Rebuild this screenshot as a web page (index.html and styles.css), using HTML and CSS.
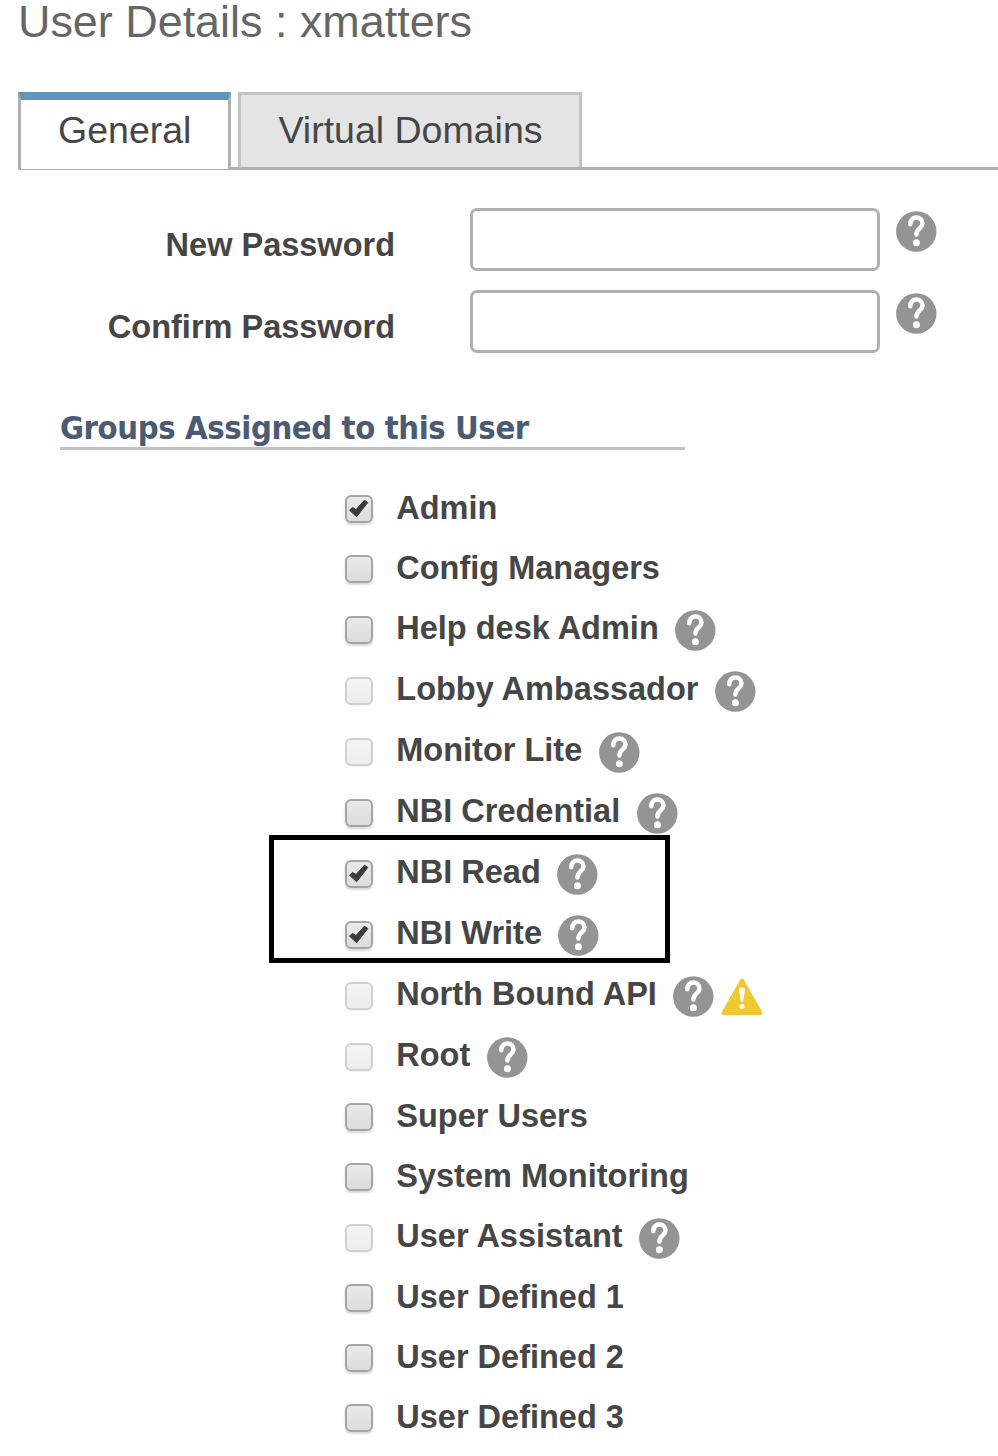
FILE: index.html
```
<!DOCTYPE html>
<html lang="en">
<head>
<meta charset="utf-8">
<title>User Details : xmatters</title>
<link rel="stylesheet" href="styles.css">
</head>
<body>
<svg width="0" height="0" class="defs">
  <symbol id="help" viewBox="0 0 41 41">
    <circle cx="20.3" cy="20.5" r="20.2" fill="#949494"/>
    <path d="M14.300 13.200C14.300 9 16.800 6.600 20.400 6.600C24.100 6.600 26.500 9 26.500 12.600C26.500 17.400 20.400 17.600 20.400 23.400" fill="none" stroke="#fff" stroke-width="4.500" stroke-linecap="round"/>
    <circle cx="20.400" cy="31.800" r="3.500" fill="#fff"/>
  </symbol>
  <symbol id="check" viewBox="0 0 28 28">
    <path d="M4.600 15.200L7.600 12.400L11 14.600L19.400 5.200L22.800 7.500L11.600 21.800Z" fill="#3b3b3b" stroke="#3b3b3b" stroke-width="1" stroke-linejoin="round"/>
  </symbol>
  <symbol id="warn" viewBox="0 0 42 38">
    <path d="M21 2.500L39.500 35H2.500Z" fill="#f0c930" stroke="#f0c930" stroke-width="4" stroke-linejoin="round"/>
    <path d="M18 12Q18 9.500 21 9.500Q24 9.500 24 12L22.200 23.500H19.800Z" fill="#fff"/>
    <circle cx="21" cy="28.500" r="2.500" fill="#fff"/>
  </symbol>
</svg>
<h1 class="title">User Details : xmatters</h1>
<nav class="tabs">
  <a class="tab active"><span>General</span></a>
  <a class="tab"><span>Virtual Domains</span></a>
</nav>
<form class="form">
  <div class="field"><label for="pw">New Password</label><input id="pw" type="password"><svg class="help"><use href="#help"/></svg></div>
  <div class="field"><label for="pw2">Confirm Password</label><input id="pw2" type="password"><svg class="help"><use href="#help"/></svg></div>
</form>
<h2 class="section"><span>Groups Assigned to this User</span></h2>
<ul class="groups">
  <li><i class="box"><svg><use href="#check"/></svg></i><span>Admin</span></li>
  <li><i class="box"></i><span>Config Managers</span></li>
  <li class="info"><i class="box"></i><span>Help desk Admin</span><svg class="help"><use href="#help"/></svg></li>
  <li class="info"><i class="box off"></i><span>Lobby Ambassador</span><svg class="help"><use href="#help"/></svg></li>
  <li class="info"><i class="box off"></i><span>Monitor Lite</span><svg class="help"><use href="#help"/></svg></li>
  <li class="info"><i class="box"></i><span>NBI Credential</span><svg class="help"><use href="#help"/></svg></li>
  <li class="info"><i class="box"><svg><use href="#check"/></svg></i><span>NBI Read</span><svg class="help"><use href="#help"/></svg></li>
  <li class="info"><i class="box"><svg><use href="#check"/></svg></i><span>NBI Write</span><svg class="help"><use href="#help"/></svg></li>
  <li class="info"><i class="box off"></i><span>North Bound API</span><svg class="help"><use href="#help"/></svg><svg class="warn"><use href="#warn"/></svg></li>
  <li class="info"><i class="box off"></i><span>Root</span><svg class="help"><use href="#help"/></svg></li>
  <li><i class="box"></i><span>Super Users</span></li>
  <li><i class="box"></i><span>System Monitoring</span></li>
  <li class="info"><i class="box off"></i><span>User Assistant</span><svg class="help"><use href="#help"/></svg></li>
  <li><i class="box"></i><span>User Defined 1</span></li>
  <li><i class="box"></i><span>User Defined 2</span></li>
  <li><i class="box"></i><span>User Defined 3</span></li>
  <li class="highlight" aria-hidden="true"></li>
</ul>
</body>
</html>
```
FILE: styles.css
```
* { box-sizing: border-box; }
html { overflow: hidden; }
body {
  margin: 0;
  width: 998px;
  height: 1456px;
  background: #fefefe;
  color: #464646;
  font-family: "Liberation Sans", Arial, sans-serif;
}
.defs { position: absolute; }
.title {
  margin: 0;
  height: 92px;
  padding-left: 18px;
  font-size: 44.9px;
  font-weight: 400;
  line-height: 44px;
  color: #666;
}
.tabs {
  display: flex;
  gap: 7px;
  height: 78px;
  padding-left: 18px;
  background: linear-gradient(#b0b0b0, #b0b0b0) 18px 75px / 980px 3px no-repeat;
}
.tab {
  height: 75px;
  border: 3px solid #c3c3c3;
  border-bottom: 0;
  background: #e4e4e4;
  font-size: 37.5px;
  line-height: 70px;
  width: 344px;
  padding-left: 37.5px;
  white-space: nowrap;
}
.tab.active {
  width: 213px;
  height: 78px;
  padding-left: 37px;
  border-color: #b0b0b0;
  border-top: 8px solid #5f97bb;
  border-bottom: 1px solid #b0b0b0;
  background: #fefefe;
  line-height: 60px;
}
.form { padding-top: 38px; height: 238px; }
.field {
  display: flex;
  align-items: flex-start;
  height: 82px;
}
.field label {
  width: 395px;
  text-align: right;
  font-size: 32.5px;
  font-weight: 700;
  line-height: 74px;
}
.field input {
  width: 410px;
  height: 63px;
  margin-left: 75px;
  border: 3px solid #b0b0b0;
  border-radius: 7px;
  background: #fff;
}
.help { flex: none; width: 41px; height: 41px; }
.field .help { margin: 3px 0 0 15.5px; }
.section {
  margin: 0 0 28px 60px;
  width: 625px;
  height: 42px;
  border-bottom: 3px solid #b8c5cf;
  font: 700 32.5px/41px "DejaVu Sans Condensed", "DejaVu Sans", sans-serif;
  font-stretch: condensed;
  letter-spacing: -0.4px;
  color: #4c5b74;
  white-space: nowrap;
}
.groups {
  position: relative;
  margin: 0;
  padding: 0 0 0 345px;
  list-style: none;
}
.groups li {
  display: flex;
  align-items: flex-start;
  height: 60px;
  font-size: 32.5px;
  font-weight: 700;
  line-height: 60px;
  white-space: nowrap;
}
.groups li.info { height: 61px; }
.box {
  flex: none;
  width: 28px;
  height: 28px;
  margin: 17px 23.300px 0 0;
  border: 2.500px solid #a5a5a5;
  border-radius: 6px;
  background: linear-gradient(#eaeaea, #dcdcdc);
  box-shadow: 0 2px 2px rgba(0, 0, 0, .15);
}
.box svg { display: block; width: 28px; height: 28px; margin: -2px; }
.info .box { margin-top: 18px; }
.box.off {
  border-color: #d0d0d0;
  background: linear-gradient(#f4f4f4, #ededed);
  box-shadow: 0 1px 1px rgba(0, 0, 0, .05);
}
.info .help { margin: 12px 0 0 16.500px; }
.warn { width: 42px; height: 38px; margin: 14px 0 0 7px; }
.groups .highlight {
  position: absolute;
  left: 269px;
  top: 357px;
  width: 401px;
  height: 128px;
  border: 5px solid #000;
}
```
